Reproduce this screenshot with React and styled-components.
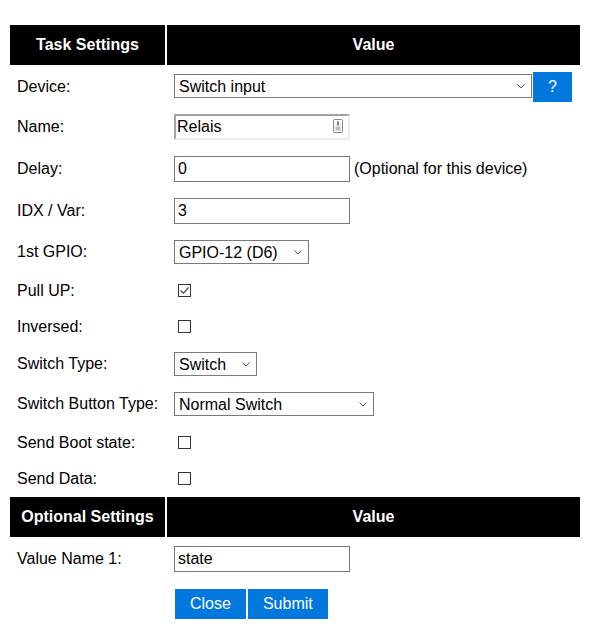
import React from 'react';
import styled, { createGlobalStyle } from 'styled-components';

const GlobalStyle = createGlobalStyle`
  html, body { margin: 0; padding: 0; background: #fff; }
  body {
    font-family: "Liberation Sans", Arial, sans-serif;
    font-size: 16px;
    color: #000;
  }
`;

const Page = styled.div`
  padding: 23px 8px 8px;
`;

const Table = styled.table`
  width: 574px;
  table-layout: fixed;
  border-collapse: separate;
  border-spacing: 2px;
  font-size: 16px;
`;

const HeadCell = styled.th`
  background: #000;
  color: #fff;
  font-weight: bold;
  padding: 11px 7px;
  line-height: 18px;
  text-align: center;
  width: ${(p) => (p.$w ? `${p.$w}px` : 'auto')};
`;

const KINDS = {
  device: { top: 5, bottom: 5, lh: 30 },
  field: { top: 5, bottom: 9, lh: 26 },
  select: { top: 5, bottom: 9, lh: 24 },
  check: { top: 9, bottom: 12, lh: 13 },
  checkLast: { top: 9, bottom: 10, lh: 13 },
  optional: { top: 7, bottom: 7, lh: 26 },
  actions: { top: 8, bottom: 4, lh: 30 },
};

const Row = styled.tr`
  & > td {
    padding: ${(p) => KINDS[p.$kind].top}px 7px ${(p) => KINDS[p.$kind].bottom}px;
    line-height: ${(p) => KINDS[p.$kind].lh}px;
    vertical-align: top;
  }
`;

const Label = styled.td`
  white-space: nowrap;
  color: #000;
`;

const Value = styled.td``;

const Line = styled.div`
  display: flex;
  align-items: ${(p) => (p.$top ? 'flex-start' : 'center')};
  gap: ${(p) => p.$gap || 0}px;
  white-space: nowrap;
`;

const TextInput = styled.input`
  box-sizing: border-box;
  width: ${(p) => p.$w}px;
  height: 26px;
  margin: 0;
  padding: 0 ${(p) => (p.$inset ? 1 : 3)}px;
  border-style: solid;
  border-width: ${(p) => (p.$inset ? 2 : 1)}px;
  border-color: ${(p) => (p.$inset ? '#a3a3a3 #ececec #ececec #a3a3a3' : '#7a7a7a')};
  border-radius: 0;
  background: #fff;
  color: #000;
  font: 16px "Liberation Sans", Arial, sans-serif;
  outline: none;
`;

const InputWrap = styled.span`
  position: relative;
  display: inline-flex;
`;

const FieldIcon = styled.svg`
  position: absolute;
  right: 7px;
  top: 5px;
  pointer-events: none;
`;

const SelectWrap = styled.span`
  position: relative;
  display: inline-flex;
  width: ${(p) => p.$w}px;
  height: 24px;
  margin-top: ${(p) => p.$mt || 0}px;
`;

const Select = styled.select`
  appearance: none;
  -webkit-appearance: none;
  box-sizing: border-box;
  width: 100%;
  height: 24px;
  margin: 0;
  padding: 0 22px 0 4px;
  border: 1px solid #7a7a7a;
  border-radius: 0;
  background: #fff;
  color: #000;
  font: 16px "Liberation Sans", Arial, sans-serif;
  outline: none;
`;

const Chevron = styled.svg`
  position: absolute;
  right: 7px;
  top: 10px;
  pointer-events: none;
`;

const Button = styled.button`
  height: 30px;
  margin: 0;
  padding: 0 15px;
  border: 0;
  border-radius: 0;
  background: #0077dd;
  color: #fff;
  font: 16px "Liberation Sans", Arial, sans-serif;
  line-height: 30px;
  cursor: pointer;
`;

const Actions = styled.div`
  display: flex;
  gap: 2px;
  margin-left: 1px;
`;

const Check = styled.span`
  box-sizing: border-box;
  display: inline-flex;
  width: 13px;
  height: 13px;
  margin-left: 4px;
  border: 1px solid #333;
  background: #fff;
`;

const Note = styled.span`
  color: #000;
`;

function Dropdown({ w, value, mt }) {
  return (
    <SelectWrap $w={w} $mt={mt}>
      <Select defaultValue={value}>
        <option>{value}</option>
      </Select>
      <Chevron width="8" height="5" viewBox="0 0 8 5">
        <polyline points="0.5,0.5 4,4 7.5,0.5" fill="none" stroke="#555" strokeWidth="1" />
      </Chevron>
    </SelectWrap>
  );
}

function CheckBox({ checked }) {
  return (
    <Check role="checkbox" aria-checked={checked ? 'true' : 'false'}>
      {checked && (
        <svg width="11" height="11" viewBox="0 0 11 11">
          <polyline
            points="1.5,5.5 4.5,8.2 9.5,2.5"
            fill="none"
            stroke="#444"
            strokeWidth="1.2"
          />
        </svg>
      )}
    </Check>
  );
}

function Field({ kind, label, children }) {
  return (
    <Row $kind={kind}>
      <Label>{label}</Label>
      <Value>{children}</Value>
    </Row>
  );
}

export default function App() {
  return (
    <>
      <GlobalStyle />
      <Page>
        <Table>
          <tbody>
            <tr>
              <HeadCell $w={141}>Task Settings</HeadCell>
              <HeadCell>Value</HeadCell>
            </tr>
            <Field kind="device" label="Device:">
              <Line $top $gap={1}>
                <Dropdown w={358} value="Switch input" mt={2} />
                <Button type="button">?</Button>
              </Line>
            </Field>
            <Field kind="field" label="Name:">
              <Line>
                <InputWrap>
                  <TextInput $w={176} $inset defaultValue="Relais" />
                  <FieldIcon width="10" height="14" viewBox="0 0 10 14">
                    <rect x="0.5" y="0.5" width="9" height="13" rx="1" fill="#f6f6f6" stroke="#8a8a8a" />
                    <rect x="4" y="2.5" width="2" height="4" fill="#7a7a7a" />
                    <rect x="2.5" y="7.5" width="5" height="4" fill="#bdbdbd" />
                  </FieldIcon>
                </InputWrap>
              </Line>
            </Field>
            <Field kind="field" label="Delay:">
              <Line $gap={4}>
                <TextInput $w={176} defaultValue="0" />
                <Note>(Optional for this device)</Note>
              </Line>
            </Field>
            <Field kind="field" label="IDX / Var:">
              <Line>
                <TextInput $w={176} defaultValue="3" />
              </Line>
            </Field>
            <Field kind="select" label="1st GPIO:">
              <Line>
                <Dropdown w={135} value="GPIO-12 (D6)" />
              </Line>
            </Field>
            <Field kind="check" label="Pull UP:">
              <Line>
                <CheckBox checked />
              </Line>
            </Field>
            <Field kind="check" label="Inversed:">
              <Line>
                <CheckBox />
              </Line>
            </Field>
            <Field kind="select" label="Switch Type:">
              <Line>
                <Dropdown w={83} value="Switch" />
              </Line>
            </Field>
            <Field kind="select" label="Switch Button Type:">
              <Line>
                <Dropdown w={200} value="Normal Switch" />
              </Line>
            </Field>
            <Field kind="check" label="Send Boot state:">
              <Line>
                <CheckBox />
              </Line>
            </Field>
            <Field kind="checkLast" label="Send Data:">
              <Line>
                <CheckBox />
              </Line>
            </Field>
            <tr>
              <HeadCell>Optional Settings</HeadCell>
              <HeadCell>Value</HeadCell>
            </tr>
            <Field kind="optional" label="Value Name 1:">
              <Line>
                <TextInput $w={176} defaultValue="state" />
              </Line>
            </Field>
            <Field kind="actions" label="">
              <Actions>
                <Button type="button">Close</Button>
                <Button type="button">Submit</Button>
              </Actions>
            </Field>
          </tbody>
        </Table>
      </Page>
    </>
  );
}
